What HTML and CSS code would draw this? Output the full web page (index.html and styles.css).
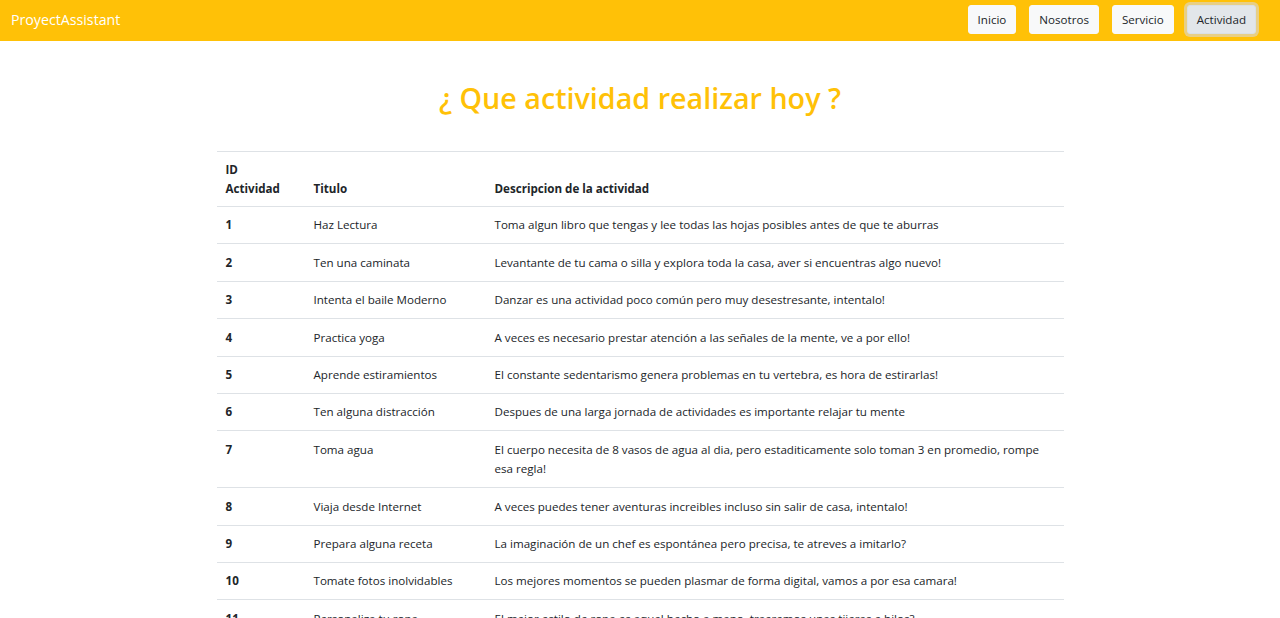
FILE: index.html
```html
<!DOCTYPE html>
<html lang="es">
<head>
<meta charset="utf-8">
<title>ProyectAssistant</title>
<link rel="stylesheet" href="styles.css">
</head>
<body>
<nav class="navbar">
  <a class="brand" href="#">ProyectAssistant</a>
  <div class="nav-buttons">
    <a class="btn" href="#">Inicio</a>
    <a class="btn" href="#">Nosotros</a>
    <a class="btn" href="#">Servicio</a>
    <a class="btn active" href="#">Actividad</a>
  </div>
</nav>
<main class="content">
  <h1 class="title">¿ Que actividad realizar hoy ?</h1>
  <table class="table">
    <thead>
      <tr>
        <th class="col-id">ID<br>Actividad</th>
        <th class="col-title">Titulo</th>
        <th>Descripcion de la actividad</th>
      </tr>
    </thead>
    <tbody>
      <tr><th>1</th><td>Haz Lectura</td><td>Toma algun libro que tengas y lee todas las hojas posibles antes de que te aburras</td></tr>
      <tr><th>2</th><td>Ten una caminata</td><td>Levantante de tu cama o silla y explora toda la casa, aver si encuentras algo nuevo!</td></tr>
      <tr><th>3</th><td>Intenta el baile Moderno</td><td>Danzar es una actividad poco común pero muy desestresante, intentalo!</td></tr>
      <tr><th>4</th><td>Practica yoga</td><td>A veces es necesario prestar atención a las señales de la mente, ve a por ello!</td></tr>
      <tr><th>5</th><td>Aprende estiramientos</td><td>El constante sedentarismo genera problemas en tu vertebra, es hora de estirarlas!</td></tr>
      <tr><th>6</th><td>Ten alguna distracción</td><td>Despues de una larga jornada de actividades es importante relajar tu mente</td></tr>
      <tr><th>7</th><td>Toma agua</td><td>El cuerpo necesita de 8 vasos de agua al dia, pero estaditicamente solo toman 3 en promedio, rompe esa regla!</td></tr>
      <tr><th>8</th><td>Viaja desde Internet</td><td>A veces puedes tener aventuras increibles incluso sin salir de casa, intentalo!</td></tr>
      <tr><th>9</th><td>Prepara alguna receta</td><td>La imaginación de un chef es espontánea pero precisa, te atreves a imitarlo?</td></tr>
      <tr><th>10</th><td>Tomate fotos inolvidables</td><td>Los mejores momentos se pueden plasmar de forma digital, vamos a por esa camara!</td></tr>
      <tr><th>11</th><td>Personaliza tu ropa</td><td>El mejor estilo de ropa es aquel hecho a mano, traeremos unas tijeras e hilos?</td></tr>
    </tbody>
  </table>
</main>
</body>
</html>
```

FILE: styles.css
```css
* { box-sizing: border-box; }
html, body {
  margin: 0;
  padding: 0;
  background: #fff;
  color: #212529;
  font-family: "Open Sans", "Noto Sans", "DejaVu Sans", sans-serif;
  font-size: 11.6px;
}
a { text-decoration: none; }

.navbar {
  height: 41px;
  background: #ffc107;
  display: flex;
  align-items: center;
  justify-content: space-between;
  padding: 0 24px 0 11px;
}
.brand {
  color: #fff;
  font-size: 14.2px;
  line-height: 20px;
  margin-top: -2px;
}
.nav-buttons {
  display: flex;
  gap: 13px;
  margin-top: -2px;
}
.btn {
  display: block;
  background: #f8f9fa;
  color: #212529;
  border: 1px solid #f8f9fa;
  border-radius: 3px;
  padding: 4px 9px;
  line-height: 19px;
  font-size: 11.6px;
}
.btn.active {
  background: #e2e6ea;
  border-color: #dae0e5;
  box-shadow: 0 0 0 3px rgba(216, 217, 219, 0.6);
}

.content {
  width: 847px;
  margin: 0 auto;
}
.title {
  margin: 0;
  padding: 38px 0 34px;
  text-align: center;
  color: #ffc107;
  font-size: 28.7px;
  line-height: 38px;
  font-weight: 600;
}

.table {
  width: 100%;
  border-collapse: collapse;
  line-height: 19.5px;
}
.table th, .table td {
  padding: 8.45px 9px;
  border-top: 1px solid #dee2e6;
  text-align: left;
  vertical-align: top;
}
.table th { font-weight: 700; }
.table thead th {
  vertical-align: bottom;
  padding-top: 7.5px;
  padding-bottom: 7.5px;
  border-bottom: 1px solid #dee2e6;
}
.col-id { width: 88px; }
.col-title { width: 181px; }
```
